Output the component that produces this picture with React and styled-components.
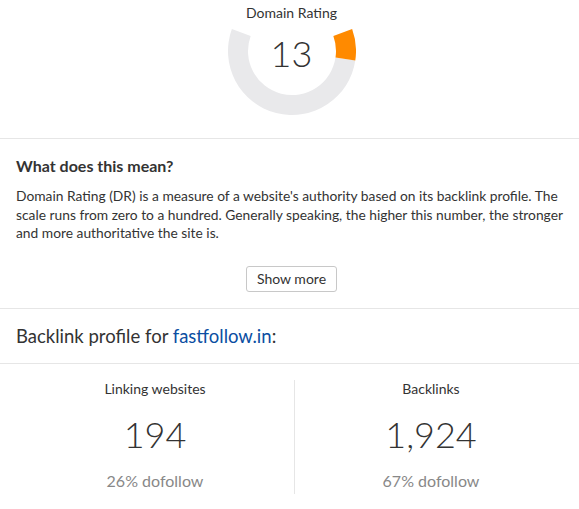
import styled, { createGlobalStyle } from 'styled-components';

const Global = createGlobalStyle`
	body {
		margin: 0;
		background: #fff;
		font-family: Lato, "Open Sans", sans-serif;
		color: #333;
	}
`

const Page = styled.div`
	width: 579px;
`

const Top = styled.section`
	display: flex;
	flex-direction: column;
	align-items: center;
	padding: 4px 12px 0 16px;
	height: 139px;
	border-bottom: 1px solid #e6e6e6;
	box-sizing: border-box;
`

const GaugeLabel = styled.div`
	font-size: 14px;
	line-height: 17px;
	color: #333;
	height: 24px;
`

const Gauge = styled.div`
	position: relative;
	width: 128px;
	height: 87px;
	svg { display: block; }
`

const GaugeValue = styled.div`
	position: absolute;
	left: 0;
	right: 0;
	top: 3px;
	text-align: center;
	font-size: 36px;
	font-weight: 300;
	line-height: 44px;
	color: #333;
`

const Explain = styled.section`
	padding: 17px 12px 16px 16px;
	border-bottom: 1px solid #e6e6e6;
`

const ExplainTitle = styled.h3`
	margin: 0 0 11px;
	font-size: 16px;
	font-weight: 700;
	line-height: 20px;
	color: #333;
`

const ExplainText = styled.p`
	margin: 0 -2px 0 0;
	font-size: 13.8px;
	line-height: 18.5px;
	color: #333;
`

const ButtonRow = styled.div`
	display: flex;
	justify-content: center;
	margin-top: 23px;
`

const MoreButton = styled.button`
	font-family: inherit;
	font-size: 14px;
	color: #333;
	background: #fff;
	border: 1px solid #c8c8c8;
	border-radius: 3px;
	height: 26px;
	padding: 0 10px;
`

const ProfileHead = styled.h2`
	margin: 0;
	padding: 15px 12px 15px 16px;
	font-size: 18.5px;
	font-weight: 400;
	line-height: 24px;
	color: #333;
	border-bottom: 1px solid #e6e6e6;
	a { color: #0b4ea2; text-decoration: none; }
`

const Stats = styled.div`
	display: grid;
	grid-template-columns: 278px 1fr;
	padding: 16px 12px 0 16px;
`

const Stat = styled.div`
	display: flex;
	flex-direction: column;
	align-items: center;
	height: 114px;
	border-left: ${p => p.$divided ? '1px solid #e6e6e6' : 'none'};
`

const StatLabel = styled.div`
	font-size: 14px;
	line-height: 18px;
`

const StatValue = styled.div`
	font-size: 36px;
	font-weight: 300;
	line-height: 46px;
	margin-top: 13px;
`

const StatSub = styled.div`
	font-size: 16px;
	line-height: 18px;
	color: #888;
	margin-top: 15px;
`

function arc(r1, r2, a0, a1) {
	// angles in degrees, screen coords, 0 = right, positive = clockwise
	let rad = (a) => a * Math.PI / 180
	let p = (r, a) => [r * Math.cos(rad(a)), r * Math.sin(rad(a))]
	let large = (a1 - a0) > 180 ? 1 : 0
	let [x0, y0] = p(r2, a0)
	let [x1, y1] = p(r2, a1)
	let [x2, y2] = p(r1, a1)
	let [x3, y3] = p(r1, a0)
	return `M${x0} ${y0} A${r2} ${r2} 0 ${large} 1 ${x1} ${y1} L${x2} ${y2} A${r1} ${r1} 0 ${large} 0 ${x3} ${y3} Z`
}

function DomainGauge({ value }) {
	let start = -20
	let span = 220
	let end = start + span * value / 100
	return (
		<Gauge>
			<svg width="128" height="87" viewBox="-64 -23 128 87">
				<path d={arc(44, 64, end, start + span)} fill="#e9e9eb" />
				<path d={arc(44, 64, start, end)} fill="#ff8a00" />
			</svg>
			<GaugeValue>{value}</GaugeValue>
		</Gauge>
	)
}

export default function App() {
	return (
		<Page>
			<Global />
			<Top>
				<GaugeLabel>Domain Rating</GaugeLabel>
				<DomainGauge value={13} />
			</Top>
			<Explain>
				<ExplainTitle>What does this mean?</ExplainTitle>
				<ExplainText>
					Domain Rating (DR) is a measure of a website's authority based on its backlink profile. The scale runs from zero to a hundred. Generally speaking, the higher this number, the stronger and more authoritative the site is.
				</ExplainText>
				<ButtonRow>
					<MoreButton>Show more</MoreButton>
				</ButtonRow>
			</Explain>
			<ProfileHead>Backlink profile for <a href="#">fastfollow.in</a>:</ProfileHead>
			<Stats>
				<Stat>
					<StatLabel>Linking websites</StatLabel>
					<StatValue>194</StatValue>
					<StatSub>26% dofollow</StatSub>
				</Stat>
				<Stat $divided>
					<StatLabel>Backlinks</StatLabel>
					<StatValue>1,924</StatValue>
					<StatSub>67% dofollow</StatSub>
				</Stat>
			</Stats>
		</Page>
	)
}
